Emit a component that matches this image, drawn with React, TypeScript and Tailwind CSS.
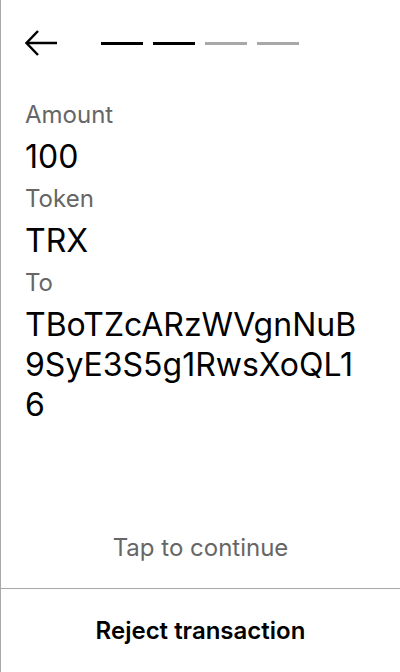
import React from "react";

const steps = [true, true, false, false];

const Field: React.FC<{ label: string; value: string }> = ({ label, value }) => (
  <>
    <p className="text-[24px] leading-[28px] text-[#666666]">{label}</p>
    <p className="text-[32px] leading-[40px] text-black break-all">{value}</p>
  </>
);

export default function App() {
  return (
    <div
      className="h-[672px] w-[400px] flex flex-col bg-white border-l border-[#a8a8a8]"
      style={{ fontFamily: "Inter, 'Noto Sans', sans-serif" }}
    >
      {/* header */}
      <div className="flex items-center h-[86px] pl-6">
        <svg width="32" height="26" viewBox="0 0 32 26" fill="none" stroke="black" strokeWidth="2.5">
          <path d="M32 13H2" />
          <path d="M13 1L1.5 13L13 25" />
        </svg>
        <div className="flex gap-[10px] ml-[44px]">
          {steps.map((done, i) => (
            <div key={i} className={`w-[42px] h-[3px] ${done ? "bg-black" : "bg-[#a8a8a8]"}`} />
          ))}
        </div>
      </div>

      {/* details */}
      <div className="flex flex-col gap-2 pl-6 pr-8 pt-[15px]">
        <Field label="Amount" value="100" />
        <Field label="Token" value="TRX" />
        <Field label="To" value="TBoTZcARzWVgnNuB9SyE3S5g1RwsXoQL16" />
      </div>

      <div className="flex-1 flex items-end justify-center pb-[26px]">
        <p className="text-[24px] leading-[28px] text-[#666666]">Tap to continue</p>
      </div>

      <button className="h-[84px] border-t border-[#a8a8a8] flex items-center justify-center text-[24px] font-semibold text-black">
        Reject transaction
      </button>
    </div>
  );
}
